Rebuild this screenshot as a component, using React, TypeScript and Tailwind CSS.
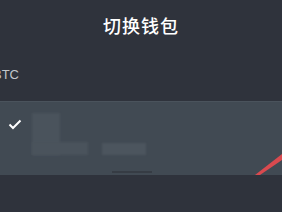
import React from "react";

export default function App() {
  return (
    <div className="w-[282px] h-[212px] overflow-hidden bg-[#2f333c] relative" style={{ fontFamily: '"Noto Sans CJK SC", "Noto Sans", sans-serif' }}>
      <div className="h-[50px] flex items-center justify-center text-white text-[18px] font-medium leading-none tracking-[1px]">
        切换钱包
      </div>
      <div className="h-[50px] flex items-center -ml-[7px]">
        <span className="text-[#c3c6cb] text-[13px]" style={{ fontFamily: '"Liberation Sans", sans-serif' }}>BTC</span>
      </div>
      <div className="relative h-[74px] mt-[1px] bg-[#414a53] border-t border-[#4a535c] overflow-hidden">
        <svg className="absolute left-[8px] top-[17px]" width="14" height="11" viewBox="0 0 14 11">
          <path d="M1.5 5.5 L5 9 L12.5 1.5" stroke="#ffffff" strokeWidth="2" fill="none" />
        </svg>
        <div className="absolute left-[32px] top-[11px] w-[28px] h-[42px] bg-[#4a535c] blur-[1px]" />
        <div className="absolute left-[32px] top-[40px] w-[56px] h-[13px] bg-[#4a535c] blur-[1px]" />
        <div className="absolute left-[102px] top-[41px] w-[44px] h-[12px] bg-[#4c555e] blur-[1px]" />
        <div className="absolute left-[112px] top-[69px] w-[40px] h-[2px] bg-[#363c44] blur-[0.5px]" />
        <svg className="absolute left-0 top-0" width="282" height="74" viewBox="0 0 282 74">
          <path d="M255 73 L282 52 L282 58 L260 73 Z" fill="#d94a4f" />
        </svg>
      </div>
    </div>
  );
}
